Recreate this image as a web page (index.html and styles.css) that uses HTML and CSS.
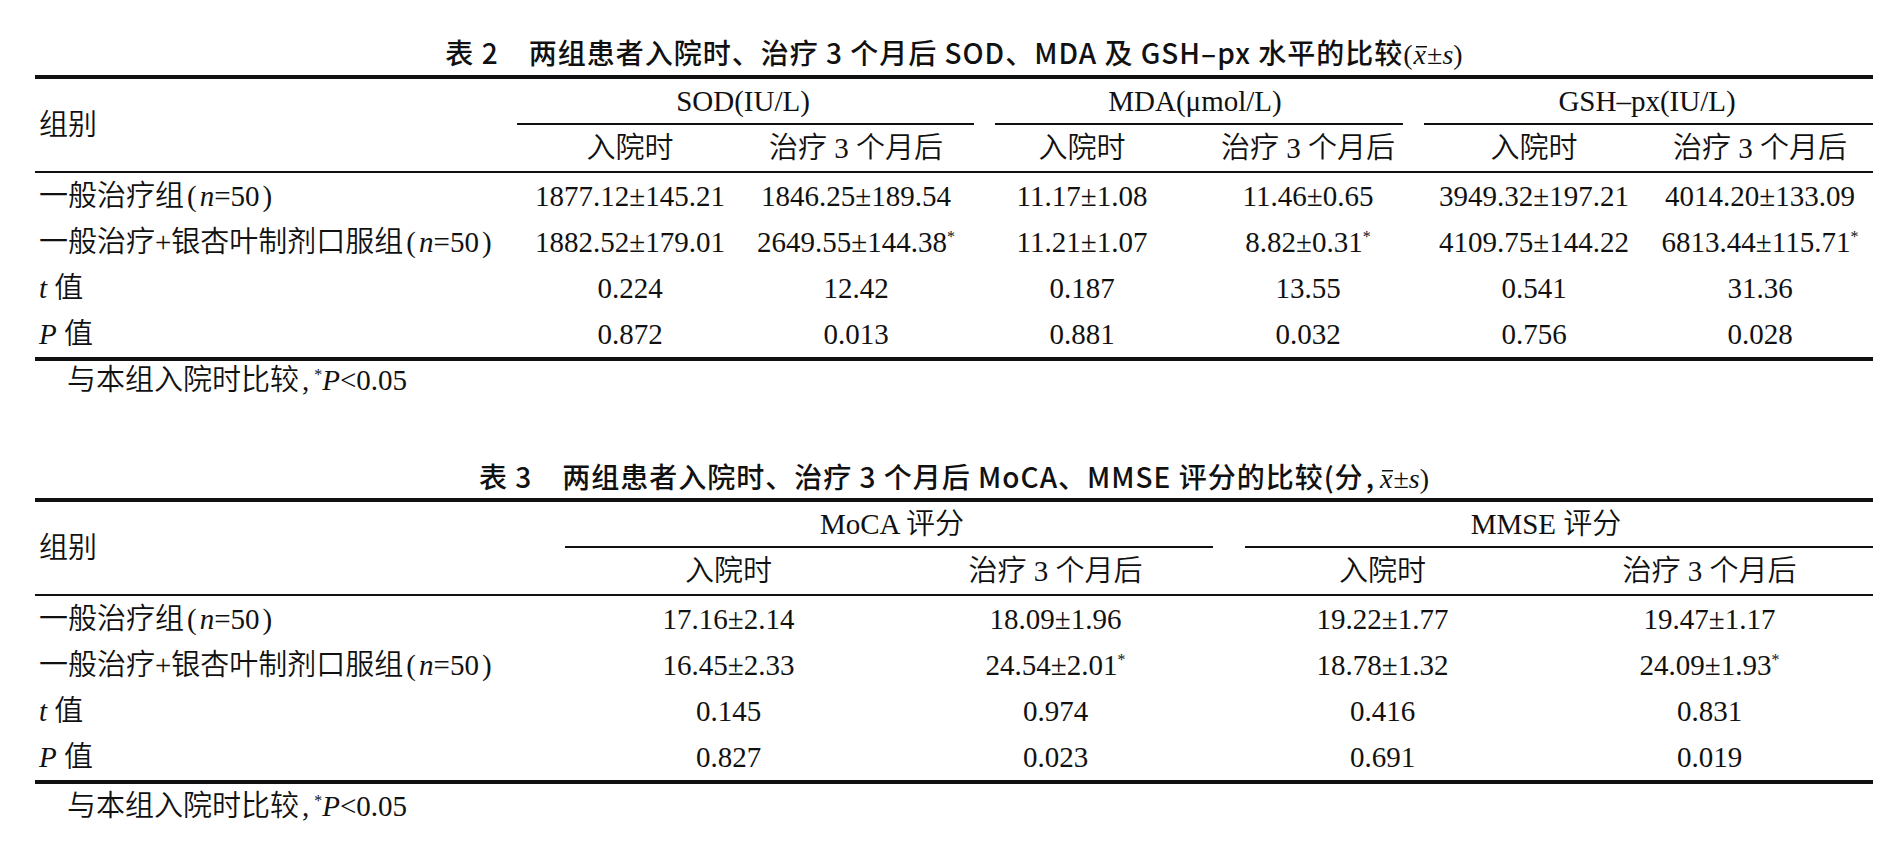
FILE: index.html
```html
<!DOCTYPE html>
<html lang="zh-CN">
<head>
<meta charset="utf-8">
<title>表2 表3</title>
<link rel="stylesheet" href="styles.css">
</head>
<body>
<div class="page">

  <section class="tblock t2">
    <h2 class="caption"><span class="cap-no">表 2</span>两组患者入院时、治疗 3 个月后 SOD、MDA 及 GSH–px 水平的比较<span class="cap-math">(<span class="xbar">x</span>±<i>s</i>)</span></h2>
    <div class="thead grid2">
      <div class="corner">组别</div>
      <div class="grp"><div class="grp-text">SOD(IU/L)</div><div class="grp-rule r-sod"></div></div>
      <div class="grp"><div class="grp-text">MDA(μmol/L)</div><div class="grp-rule r-mda"></div></div>
      <div class="grp"><div class="grp-text">GSH–px(IU/L)</div><div class="grp-rule r-gsh"></div></div>
      <div class="sub">入院时</div>
      <div class="sub">治疗 3 个月后</div>
      <div class="sub">入院时</div>
      <div class="sub">治疗 3 个月后</div>
      <div class="sub">入院时</div>
      <div class="sub">治疗 3 个月后</div>
    </div>
    <div class="tbody">
      <div class="row grid2">
        <div class="label">一般治疗组<span class="par">(</span><i>n</i>=50<span class="par">)</span></div>
        <div class="cell">1877.12±145.21</div>
        <div class="cell">1846.25±189.54</div>
        <div class="cell">11.17±1.08</div>
        <div class="cell">11.46±0.65</div>
        <div class="cell">3949.32±197.21</div>
        <div class="cell">4014.20±133.09</div>
      </div>
      <div class="row grid2">
        <div class="label">一般治疗+银杏叶制剂口服组<span class="par">(</span><i>n</i>=50<span class="par">)</span></div>
        <div class="cell">1882.52±179.01</div>
        <div class="cell">2649.55±144.38<sup class="star">*</sup></div>
        <div class="cell">11.21±1.07</div>
        <div class="cell">8.82±0.31<sup class="star">*</sup></div>
        <div class="cell">4109.75±144.22</div>
        <div class="cell">6813.44±115.71<sup class="star">*</sup></div>
      </div>
      <div class="row grid2">
        <div class="label"><i>t</i> 值</div>
        <div class="cell">0.224</div>
        <div class="cell">12.42</div>
        <div class="cell">0.187</div>
        <div class="cell">13.55</div>
        <div class="cell">0.541</div>
        <div class="cell">31.36</div>
      </div>
      <div class="row grid2">
        <div class="label"><i>P</i> 值</div>
        <div class="cell">0.872</div>
        <div class="cell">0.013</div>
        <div class="cell">0.881</div>
        <div class="cell">0.032</div>
        <div class="cell">0.756</div>
        <div class="cell">0.028</div>
      </div>
    </div>
    <p class="note">与本组入院时比较<span class="cm">,</span><sup class="star">*</sup><i>P</i>&lt;0.05</p>
  </section>

  <section class="tblock t3">
    <h2 class="caption"><span class="cap-no">表 3</span>两组患者入院时、治疗 3 个月后 MoCA、MMSE 评分的比较(分<span class="cap-cm">,</span><span class="cap-math"><span class="xbar">x</span>±<i>s</i>)</span></h2>
    <div class="thead grid3">
      <div class="corner">组别</div>
      <div class="grp"><div class="grp-text">MoCA 评分</div><div class="grp-rule r-moca"></div></div>
      <div class="grp"><div class="grp-text">MMSE 评分</div><div class="grp-rule r-mmse"></div></div>
      <div class="sub">入院时</div>
      <div class="sub">治疗 3 个月后</div>
      <div class="sub">入院时</div>
      <div class="sub">治疗 3 个月后</div>
    </div>
    <div class="tbody">
      <div class="row grid3">
        <div class="label">一般治疗组<span class="par">(</span><i>n</i>=50<span class="par">)</span></div>
        <div class="cell">17.16±2.14</div>
        <div class="cell">18.09±1.96</div>
        <div class="cell">19.22±1.77</div>
        <div class="cell">19.47±1.17</div>
      </div>
      <div class="row grid3">
        <div class="label">一般治疗+银杏叶制剂口服组<span class="par">(</span><i>n</i>=50<span class="par">)</span></div>
        <div class="cell">16.45±2.33</div>
        <div class="cell">24.54±2.01<sup class="star">*</sup></div>
        <div class="cell">18.78±1.32</div>
        <div class="cell">24.09±1.93<sup class="star">*</sup></div>
      </div>
      <div class="row grid3">
        <div class="label"><i>t</i> 值</div>
        <div class="cell">0.145</div>
        <div class="cell">0.974</div>
        <div class="cell">0.416</div>
        <div class="cell">0.831</div>
      </div>
      <div class="row grid3">
        <div class="label"><i>P</i> 值</div>
        <div class="cell">0.827</div>
        <div class="cell">0.023</div>
        <div class="cell">0.691</div>
        <div class="cell">0.019</div>
      </div>
    </div>
    <p class="note">与本组入院时比较<span class="cm">,</span><sup class="star">*</sup><i>P</i>&lt;0.05</p>
  </section>

</div>
</body>
</html>
```

FILE: styles.css
```css
* {
  box-sizing: border-box;
  margin: 0;
  padding: 0;
}

html, body {
  background: #ffffff;
}

body {
  color: #111111;
  font-family: "Liberation Serif", "Noto Sans CJK SC", serif;
  font-size: 29px;
  font-weight: 350;
  line-height: 1.2;
}

.page {
  width: 1890px;
  padding-left: 35px;
}

.tblock {
  width: 1838px;
}

/* ---------- captions ---------- */
.caption {
  font-family: "Liberation Sans Narrow", "Noto Sans CJK SC", sans-serif;
  font-weight: 500;
  font-size: 28px;
  letter-spacing: 1px;
  line-height: 28px;
  text-align: center;
  white-space: nowrap;
}

.t2 .caption {
  padding-top: 38px;
  padding-bottom: 6px;
}

.t3 .caption {
  padding-top: 63px;
  padding-bottom: 5px;
}

.cap-no {
  margin-right: 30px;
}

.cap-cm {
  margin: 0 4px 0 2px;
}

.cap-math {
  font-family: "Liberation Serif", "Noto Sans CJK SC", serif;
  font-weight: 400;
  letter-spacing: 0;
}

.xbar {
  display: inline-block;
  font-style: italic;
  padding: 0 1px;
  background-image: linear-gradient(#111111, #111111);
  background-repeat: no-repeat;
  background-size: 11px 1.5px;
  background-position: 3px 5px;
}

/* ---------- header ---------- */
.thead {
  display: grid;
  grid-template-rows: 46px 46px;
  border-top: 4px solid #111111;
  border-bottom: 2px solid #111111;
}

.grid2 {
  grid-template-columns: 482px repeat(6, 1fr);
}

.grid3 {
  grid-template-columns: 530px repeat(4, 1fr);
}

.corner {
  grid-row: 1 / 3;
  grid-column: 1;
  display: flex;
  align-items: center;
  padding-left: 4px;
}

.grp {
  grid-row: 1;
  grid-column: span 2;
  display: flex;
  flex-direction: column;
}

.grp-text {
  flex: 1;
  display: flex;
  align-items: center;
  justify-content: center;
  white-space: nowrap;
}

.grp-rule {
  height: 2px;
  background: #111111;
}

.r-sod { margin-right: -5px; }
.r-mda { margin-left: 26px; margin-right: 18px; }
.r-gsh { margin-left: 3px; }
.r-moca { margin-right: 6px; }
.r-mmse { margin-left: 26px; }

.sub {
  grid-row: 2;
  display: flex;
  align-items: center;
  justify-content: center;
  white-space: nowrap;
}

/* ---------- body ---------- */
.tbody {
  border-bottom: 4px solid #111111;
}

.row {
  display: grid;
  height: 46px;
  align-items: center;
}

.label {
  padding-left: 4px;
  white-space: nowrap;
}

.par {
  margin: 0 3px;
}

.cell {
  text-align: center;
  white-space: nowrap;
}

.star {
  font-size: 16px;
  vertical-align: 10px;
  line-height: 0;
}

/* ---------- footnote ---------- */
.note {
  padding-left: 32px;
  line-height: 38px;
  white-space: nowrap;
}

.t3 .note {
  padding-top: 3px;
}

.cm {
  margin: 0 5px 0 3px;
}
```
